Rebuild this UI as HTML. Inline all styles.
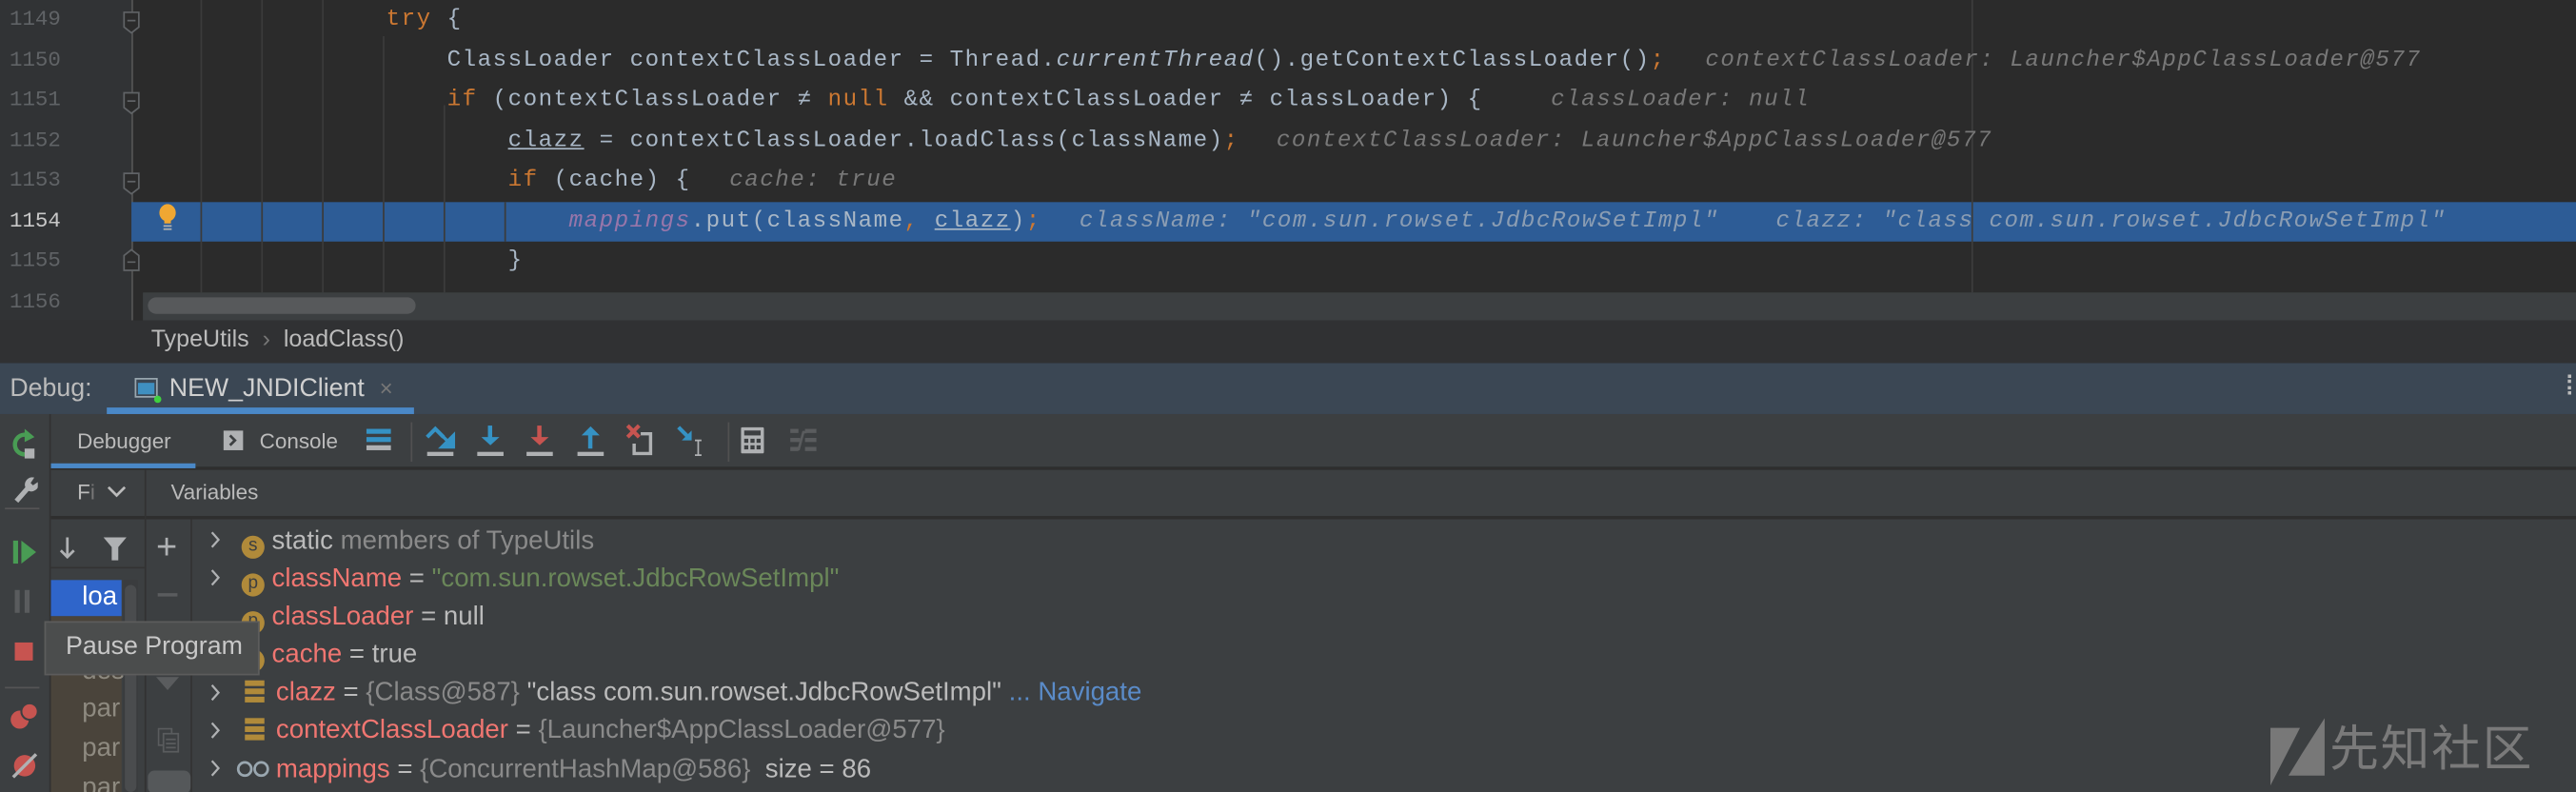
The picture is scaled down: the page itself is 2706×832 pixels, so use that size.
<!DOCTYPE html>
<html><head><meta charset="utf-8"><style>
*{margin:0;padding:0;box-sizing:border-box}
html,body{width:2706px;height:832px;overflow:hidden;background:#2b2b2b}
#r{position:absolute;left:0;top:0;width:1568px;height:482px;transform:scale(1.72577,1.72614);transform-origin:0 0;overflow:hidden;background:#2b2b2b;font-family:"Liberation Sans",sans-serif}
.a{position:absolute}
.mono{font-family:"Liberation Mono",monospace;font-size:14px;letter-spacing:0.87px;white-space:pre;line-height:24.57px}
.ln{position:absolute;left:0;width:37px;text-align:right;color:#606366;font-family:"Liberation Mono",monospace;font-size:13px;line-height:24.57px}
.code{color:#a9b7c6}
.kw{color:#cc7832}
.it{font-style:italic}
.hint{color:#787878;font-style:italic}
.u{text-decoration:underline;text-decoration-color:#a9b7c6}
.ui{font-size:13px;color:#bbbbbb;white-space:pre}
.vr{position:absolute;left:130px;height:23px;line-height:23px;font-size:16px;white-space:pre;color:#bbb}
.vn{color:#f07671}
.g{color:#8a8a8a}
.badge{display:inline-block;width:14px;height:14px;border-radius:7px;background:#b08a3a;color:#3c3f41;font-size:11px;line-height:13px;text-align:center;vertical-align:-1px}
</style></head><body><div id="r">
<div class="a" style="left:0;top:0;width:80px;height:195px;background:#313335"></div>
<div class="a" style="left:79.5px;top:0;width:1px;height:195px;background:#555"></div>
<div class="a" style="left:80px;top:123px;width:1488px;height:24px;background:#2d5c96"></div>
<div class="a" style="left:1200px;top:0;width:1px;height:178px;background:#3d3d3d"></div>
<div class="a" style="left:122px;top:0;width:1px;height:178px;background:#3b3b3b"></div>
<div class="a" style="left:159px;top:0;width:1px;height:178px;background:#3b3b3b"></div>
<div class="a" style="left:196px;top:0;width:1px;height:178px;background:#3b3b3b"></div>
<div class="a" style="left:233px;top:22px;width:1px;height:156px;background:#3b3b3b"></div>
<div class="a" style="left:270px;top:64px;width:1px;height:114px;background:#3b3b3b"></div>
<div class="a" style="left:307px;top:123px;width:1px;height:24px;background:#3b3b3b"></div>
<div class="ln" style="top:0">1149</div>
<div class="ln" style="top:24.57px">1150</div>
<div class="ln" style="top:49.14px">1151</div>
<div class="ln" style="top:73.71px">1152</div>
<div class="ln" style="top:98.28px">1153</div>
<div class="ln" style="top:122.85px;color:#c8c8c8">1154</div>
<div class="ln" style="top:147.42px">1155</div>
<div class="ln" style="top:172px">1156</div>
<svg class="a" style="left:74px;top:0" width="12" height="180" viewBox="0 0 12 180">
<g fill="#2b2b2b" stroke="#606366" stroke-width="1"><path d="M1.5 7.5h9v9l-4.5 3.5l-4.5-3.5z"/><path d="M1.5 56.5h9v9l-4.5 3.5l-4.5-3.5z"/><path d="M1.5 105.5h9v9l-4.5 3.5l-4.5-3.5z"/><path d="M1.5 164.5h9v-9l-4.5-3.5l-4.5 3.5z"/></g>
<g stroke="#606366"><path d="M3.5 12.5h5M3.5 61.5h5M3.5 110.5h5M3.5 159.5h5"/></g></svg>
<svg class="a" style="left:96px;top:124px" width="12" height="18" viewBox="0 0 12 18"><ellipse cx="6" cy="5.5" rx="5" ry="5.3" fill="#f0a732"/><rect x="4" y="8" width="4" height="4" fill="#f0a732"/><path d="M3.5 13.5h5M3.5 15.5h5" stroke="#b0b0b0"/></svg>
<div class="a mono code" style="left:86.7px;top:0">                <span class="kw">try</span> {</div>
<div class="a mono code" style="left:86.7px;top:24.57px">                    ClassLoader contextClassLoader = Thread.<span class="it">currentThread</span>().getContextClassLoader()<span class="kw">;</span></div>
<div class="a mono code" style="left:86.7px;top:49.14px">                    <span class="kw">if</span> (contextClassLoader ≠ <span class="kw">null</span> &amp;&amp; contextClassLoader ≠ classLoader) {</div>
<div class="a mono code" style="left:86.7px;top:73.71px">                        <span class="u">clazz</span> = contextClassLoader.loadClass(className)<span class="kw">;</span></div>
<div class="a mono code" style="left:86.7px;top:98.28px">                        <span class="kw">if</span> (cache) {</div>
<div class="a mono code" style="left:86.7px;top:122.85px">                            <span class="it" style="color:#9876aa">mappings</span>.put(className<span class="kw">,</span> <span class="u">clazz</span>)<span class="kw">;</span></div>
<div class="a mono code" style="left:86.7px;top:147.42px">                        }</div>
<div class="a mono hint" style="left:1038px;top:24.57px">contextClassLoader: Launcher$AppClassLoader@577</div>
<div class="a mono hint" style="left:944px;top:49.14px">classLoader: null</div>
<div class="a mono hint" style="left:777px;top:73.71px">contextClassLoader: Launcher$AppClassLoader@577</div>
<div class="a mono hint" style="left:444px;top:98.28px">cache: true</div>
<div class="a mono hint" style="left:657px;top:122.85px;color:#8b9db3">className: "com.sun.rowset.JdbcRowSetImpl"</div>
<div class="a mono hint" style="left:1081px;top:122.85px;color:#8b9db3">clazz: "class com.sun.rowset.JdbcRowSetImpl"</div>
<div class="a" style="left:87px;top:178px;width:1481px;height:17px;background:#3c3f41"></div>
<div class="a" style="left:90px;top:181px;width:163px;height:10px;border-radius:5px;background:#57595b"></div>
<div class="a" style="left:0;top:195px;width:1568px;height:26px;background:#303133"></div>
<div class="a ui" style="left:92px;top:199px;font-size:14.5px;color:#bbb">TypeUtils  <span style="color:#777">›</span>  loadClass()</div>
<div class="a" style="left:0;top:221px;width:1568px;height:31px;background:#3b4754"></div>
<div class="a ui" style="left:6px;top:228px;font-size:15.5px;color:#bbb">Debug:</div>
<svg class="a" style="left:81px;top:228px" width="18" height="18" viewBox="0 0 18 18"><rect x="1.5" y="2.5" width="13" height="11" fill="none" stroke="#9aa7b0"/><rect x="3" y="5" width="10" height="7" fill="#3f8fc0"/><circle cx="15" cy="15" r="2.2" fill="#3fd03f"/></svg>
<div class="a ui" style="left:103px;top:228px;font-size:15.5px;color:#d0d0d0">NEW_JNDIClient</div>
<div class="a ui" style="left:231px;top:228px;font-size:14px;color:#777">×</div>
<div class="a" style="left:65px;top:248px;width:187px;height:4px;background:#4a88c7"></div>
<div class="a" style="left:1563px;top:228px;width:3px;height:12px;border-left:2px dotted #bbb"></div>
<div class="a" style="left:0;top:252px;width:1568px;height:230px;background:#3c3f41"></div>
<div class="a" style="left:30px;top:252px;width:1px;height:230px;background:#323232"></div>
<div class="a" style="left:31px;top:284px;width:1537px;height:2px;background:#2e2e2e"></div>
<div class="a" style="left:31px;top:314px;width:1537px;height:2px;background:#2e2e2e"></div>
<div class="a" style="left:88px;top:286px;width:1px;height:196px;background:#323232"></div>
<div class="a ui" style="left:47px;top:261px">Debugger</div>
<div class="a" style="left:31px;top:282px;width:88px;height:3px;background:#4a88c7"></div>
<svg class="a" style="left:136px;top:262px" width="12" height="12"><rect width="12" height="12" fill="#afb1b3"/><path d="M4 3l3 3l-3 3" stroke="#3c3f41" stroke-width="1.6" fill="none"/></svg>
<div class="a ui" style="left:158px;top:261px">Console</div>
<svg class="a" style="left:223px;top:260px" width="15" height="15"><rect y="1" width="15" height="3" fill="#3592c4"/><rect y="6" width="15" height="3" fill="#3592c4"/><rect y="11" width="15" height="3" fill="#afb1b3"/></svg>
<div class="a" style="left:250px;top:257px;width:1px;height:24px;background:#515151"></div>
<svg class="a" style="left:259px;top:258px" width="180" height="20" viewBox="0 0 180 20">
<g><path d="M1 8l5-5l5 5" stroke="#3592c4" stroke-width="2.4" fill="none"/><path d="M9 6l6 6M17 7v7h-7z" stroke="#3592c4" stroke-width="2" fill="#3592c4"/><rect x="1" y="17" width="16" height="2.5" fill="#afb1b3"/></g>
<g transform="translate(31 0)"><rect x="7" y="1" width="2.6" height="8" fill="#3592c4"/><path d="M3 8h11l-5.5 5z" fill="#3592c4"/><rect x="0.5" y="17" width="16" height="2.5" fill="#afb1b3"/></g>
<g transform="translate(61 0)"><rect x="7" y="1" width="2.6" height="8" fill="#c75450"/><path d="M3 8h11l-5.5 5z" fill="#c75450"/><rect x="0.5" y="17" width="16" height="2.5" fill="#afb1b3"/></g>
<g transform="translate(92 0)"><rect x="7" y="6" width="2.6" height="9" fill="#3592c4"/><path d="M3 7h11l-5.5-5.5z" fill="#3592c4"/><rect x="0.5" y="17" width="16" height="2.5" fill="#afb1b3"/></g>
<g transform="translate(122 0)"><path d="M1 1l7 7M8 1l-7 7" stroke="#c75450" stroke-width="2.4"/><path d="M9 6h6v12h-10v-6" stroke="#afb1b3" stroke-width="2" fill="none"/></g>
<g transform="translate(153 0)"><path d="M1 2l6 6" stroke="#3592c4" stroke-width="2.4"/><path d="M9 4v6h-6z" fill="#3592c4"/><path d="M11 10h4M13 10v9M11 19h4" stroke="#afb1b3" stroke-width="1"/></g>
</svg>
<div class="a" style="left:443px;top:257px;width:1px;height:24px;background:#515151"></div>
<svg class="a" style="left:451px;top:260px" width="14" height="16"><rect width="14" height="16" rx="1" fill="#afb1b3"/><rect x="2" y="2" width="10" height="3" fill="#3c3f41"/><g fill="#3c3f41"><rect x="2" y="7" width="2.5" height="2.5"/><rect x="5.8" y="7" width="2.5" height="2.5"/><rect x="9.5" y="7" width="2.5" height="2.5"/><rect x="2" y="11" width="2.5" height="2.5"/><rect x="5.8" y="11" width="2.5" height="2.5"/><rect x="9.5" y="11" width="2.5" height="2.5"/></g></svg>
<svg class="a" style="left:481px;top:261px" width="16" height="14"><g fill="#5a5c5e"><rect y="0" width="5" height="2.5"/><rect x="9" y="0" width="7" height="2.5"/><rect y="5.5" width="6" height="2.5"/><rect x="9" y="5.5" width="7" height="2.5"/><rect y="11" width="5" height="2.5"/><rect x="9" y="11" width="7" height="2.5"/></g><path d="M5 13l3-11h2" stroke="#5a5c5e" stroke-width="1.5" fill="none"/></svg>
<div class="a ui" style="left:47px;top:292px">F<span style="color:#777">i</span></div>
<svg class="a" style="left:65px;top:295px" width="12" height="8"><path d="M1 1.5l5 5l5-5" stroke="#bbb" stroke-width="1.6" fill="none"/></svg>
<div class="a ui" style="left:104px;top:292px">Variables</div>
<svg class="a" style="left:6px;top:260px" width="18" height="20"><path d="M13 6a6 6 0 1 0 1 8" stroke="#499c54" stroke-width="2.6" fill="none"/><path d="M9 1l6 5l-6 3z" fill="#499c54"/><rect x="9" y="13" width="6" height="6" fill="#afb1b3"/></svg>
<svg class="a" style="left:7px;top:289px" width="16" height="18"><path d="M3 16l7-8" stroke="#afb1b3" stroke-width="3"/><path d="M10 9a4 4 0 0 1 3-7l-2 3l2 2l3-2a4 4 0 0 1-6 4" fill="#afb1b3" stroke="#afb1b3"/></svg>
<div class="a" style="left:3px;top:309px;width:21px;height:1px;background:#555"></div>
<svg class="a" style="left:7px;top:327px" width="18" height="18"><rect x="1" y="2" width="3" height="14" fill="#499c54"/><path d="M6 2l9 7l-9 7z" fill="#499c54"/></svg>
<svg class="a" style="left:9px;top:359px" width="10" height="14"><rect x="0" width="3" height="14" fill="#5a5c5e"/><rect x="6" width="3" height="14" fill="#5a5c5e"/></svg>
<div class="a" style="left:9px;top:391px;width:11px;height:11px;background:#c75450"></div>
<div class="a" style="left:3px;top:418px;width:21px;height:1px;background:#555"></div>
<svg class="a" style="left:6px;top:427px" width="20" height="18"><circle cx="6" cy="11" r="5.5" fill="#c75450"/><circle cx="12" cy="6" r="5" fill="#c75450" stroke="#3c3f41" stroke-width="1.2"/></svg>
<svg class="a" style="left:6px;top:457px" width="18" height="18"><circle cx="9" cy="9" r="6.5" fill="#c75450"/><path d="M2 16L16 2" stroke="#afb1b3" stroke-width="2"/></svg>
<svg class="a" style="left:35px;top:325px" width="50" height="18"><path d="M6 2v12M2 10l4 4l4-4" stroke="#afb1b3" stroke-width="1.6" fill="none"/><path d="M28 2h14l-5 6v8h-4v-8z" fill="#afb1b3"/></svg>
<div class="a" style="left:31px;top:345px;width:57px;height:1px;background:#333"></div>
<div class="a" style="left:31px;top:353px;width:43px;height:22px;background:#2f65ca"></div>
<div class="a ui" style="left:50px;top:355px;font-size:16px;color:#fff">loa</div>
<div class="a" style="left:31px;top:375px;width:43px;height:107px;background:#4a443b"></div>
<div class="a ui" style="left:50px;top:400px;font-size:16px;color:#8e8a80">des</div>
<div class="a ui" style="left:50px;top:423px;font-size:16px;color:#8e8a80">par</div>
<div class="a ui" style="left:50px;top:447px;font-size:16px;color:#8e8a80">par</div>
<div class="a ui" style="left:50px;top:471px;font-size:16px;color:#8e8a80">par</div>
<div class="a" style="left:75px;top:353px;width:9px;height:129px;background:#3a3c3e"></div>
<div class="a" style="left:76px;top:356px;width:7px;height:126px;border-radius:3.5px;background:#4a4c4e"></div>
<div class="a" style="left:116px;top:316px;width:1px;height:166px;background:#333"></div>
<div class="a" style="left:95px;top:323px;font-size:22px;color:#afb1b3;line-height:20px">+</div>
<div class="a" style="left:96px;top:361px;width:12px;height:2px;background:#5a5c5e"></div>
<svg class="a" style="left:95px;top:412px" width="14" height="10"><path d="M0 0h14l-7 8z" fill="#5a5c5e"/></svg>
<svg class="a" style="left:96px;top:443px" width="14" height="16"><rect x="0.5" y="0.5" width="8" height="10" fill="none" stroke="#5a5c5e"/><rect x="3.5" y="3.5" width="9" height="11" fill="#3c3f41" stroke="#5a5c5e"/><path d="M5 7h6M5 9.5h6M5 12h6" stroke="#5a5c5e"/></svg>
<div class="a" style="left:90px;top:469px;width:26px;height:14px;border-radius:4px;background:#55585a"></div>
<svg class="a" style="left:126px;top:322px" width="10" height="160"><g stroke="#afb1b3" stroke-width="1.3" fill="none"><path d="M3 2l4 4.5l-4 4.5"/><path d="M3 25l4 4.5l-4 4.5"/><path d="M3 95l4 4.5l-4 4.5"/><path d="M3 118l4 4.5l-4 4.5"/><path d="M3 141l4 4.5l-4 4.5"/></g></svg>
<div class="vr" style="top:318px;left:147px"><span class="badge">s</span> static <span class="g">members of TypeUtils</span></div>
<div class="vr" style="top:341px;left:147px"><span class="badge">p</span> <span class="vn">className</span> = <span style="color:#6a8759">"com.sun.rowset.JdbcRowSetImpl"</span></div>
<div class="vr" style="top:364px;left:147px"><span class="badge">p</span> <span class="vn">classLoader</span> = null</div>
<div class="vr" style="top:387px;left:147px"><span class="badge">p</span> <span class="vn">cache</span> = true</div>
<svg class="a" style="left:149px;top:414px" width="12" height="40"><g fill="#b08a3a"><rect y="0" width="12" height="3.5"/><rect y="5" width="12" height="3.5"/><rect y="10" width="12" height="3.5"/><rect y="23" width="12" height="3.5"/><rect y="28" width="12" height="3.5"/><rect y="33" width="12" height="3.5"/></g></svg>
<div class="vr" style="top:410px;left:168px"><span class="vn">clazz</span> = <span class="g">{Class@587}</span> "class com.sun.rowset.JdbcRowSetImpl" <span style="color:#5a8bc8">... Navigate</span></div>
<div class="vr" style="top:433px;left:168px"><span class="vn">contextClassLoader</span> = <span class="g">{Launcher$AppClassLoader@577}</span></div>
<svg class="a" style="left:144px;top:462px" width="22" height="12"><g fill="none" stroke="#9aa7b0" stroke-width="1.6"><circle cx="5" cy="6" r="4"/><circle cx="15" cy="6" r="4"/></g></svg>
<div class="vr" style="top:457px;left:168px"><span class="vn">mappings</span> = <span class="g">{ConcurrentHashMap@586}</span>  size = 86</div>
<div class="a" style="left:27px;top:378px;width:131px;height:33px;background:#4b4d4d;border:1px solid #5c5c5c"></div>
<div class="a ui" style="left:40px;top:385px;font-size:15.5px;color:#c8c8c8">Pause Program</div>
<svg class="a" style="left:1381px;top:437px" width="34" height="42"><path d="M1 6h18L1 41z" fill="#787878"/><path d="M20 22L34 0v35h-22z" fill="#787878"/></svg>
<div class="a" style="left:1418px;top:440px;font-family:'Liberation Sans','Noto Sans CJK SC',sans-serif;font-size:30px;color:#7a7a7a;line-height:34px;letter-spacing:1px">先知社区</div>
</div></body></html>
